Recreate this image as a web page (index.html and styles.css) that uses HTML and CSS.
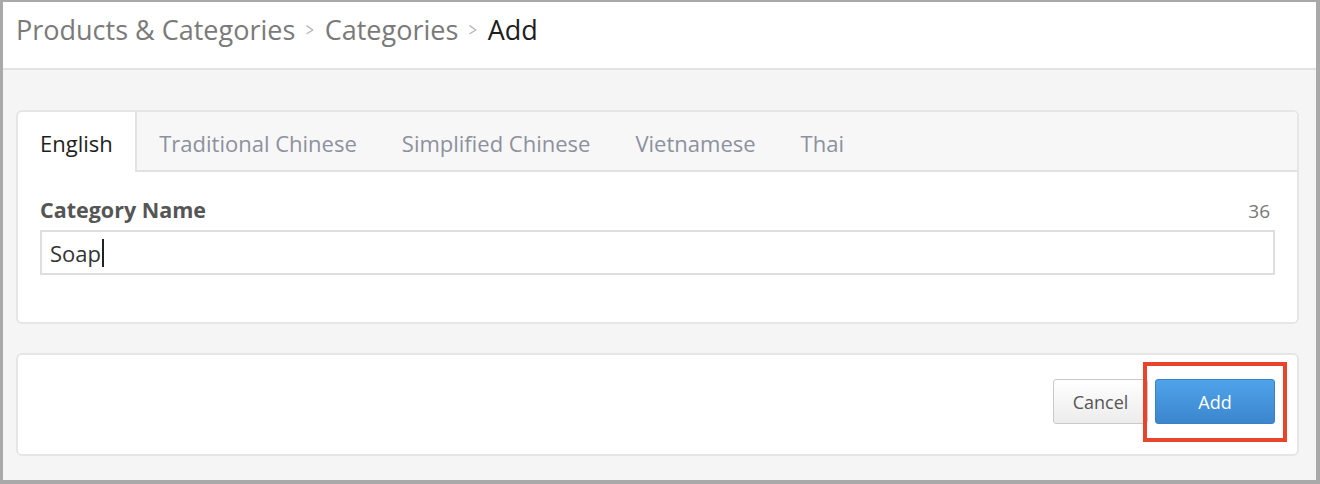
FILE: index.html
```html
<!DOCTYPE html>
<html>
<head>
<meta charset="utf-8">
<link rel="stylesheet" href="styles.css">
</head>
<body>
<div class="frame">
  <header class="header">
    <nav class="crumbs">
      <span class="crumb">Products &amp; Categories</span>
      <span class="sep">&gt;</span>
      <span class="crumb">Categories</span>
      <span class="sep">&gt;</span>
      <span class="crumb current">Add</span>
    </nav>
  </header>
  <main class="main">
    <section class="card">
      <div class="tabs">
        <div class="tab active">English</div>
        <div class="tab">Traditional Chinese</div>
        <div class="tab">Simplified Chinese</div>
        <div class="tab">Vietnamese</div>
        <div class="tab">Thai</div>
      </div>
      <div class="card-body">
        <div class="label-row">
          <label class="label">Category Name</label>
          <span class="count">36</span>
        </div>
        <div class="input"><span class="value">Soap</span><span class="caret"></span></div>
      </div>
    </section>
    <section class="card actions">
      <button class="btn btn-cancel">Cancel</button>
      <div class="highlight-wrap">
        <button class="btn btn-primary">Add</button>
        <div class="highlight"></div>
      </div>
    </section>
  </main>
</div>
</body>
</html>
```

FILE: styles.css
```css
* { box-sizing: border-box; }
html, body { margin: 0; padding: 0; }
body {
  width: 1320px;
  height: 484px;
  font-family: "Open Sans", "Liberation Sans", sans-serif;
  background: #a9a9a9;
  overflow: hidden;
}
.frame {
  margin: 2px 4px 0 3px;
  height: 478px;
  background: #f5f5f5;
  display: flex;
  flex-direction: column;
}
.header {
  background: #fff;
  height: 68px;
  border-bottom: 2px solid #e2e2e2;
  padding: 9px 0 0 13px;
}
.crumbs {
  display: flex;
  align-items: baseline;
  gap: 9px;
  font-size: 27px;
  font-weight: 400;
  color: #7a7a7a;
}
.sep {
  color: #b0b3ba;
  font-size: 20px;
  transform: scaleX(0.7);
  position: relative;
  top: -3px;
}
.crumb.current { color: #1e1e1e; }
.main {
  padding: 40px 17px 0 13px;
  display: flex;
  flex-direction: column;
  gap: 29px;
}
.card {
  background: #fff;
  border: 2px solid #e6e6e6;
  border-radius: 6px;
}
.tabs {
  display: flex;
  height: 60px;
  background: #f7f7f7;
  border-bottom: 2px solid #e2e2e2;
  border-radius: 6px 6px 0 0;
}
.tab {
  padding: 4px 22.5px 0 22.5px;
  font-size: 22px;
  color: #8c919e;
  display: flex;
  align-items: center;
}
.tab.active {
  background: #fff;
  color: #1e1e1e;
  border-right: 2px solid #e2e2e2;
  margin-bottom: -2px;
  border-radius: 6px 0 0 0;
  padding: 4px 22px 2px 22px;
}
.card-body {
  padding: 23px 22px 47px 22px;
}
.label-row {
  display: flex;
  justify-content: space-between;
  align-items: baseline;
  line-height: 30px;
  margin-bottom: 4px;
}
.label {
  font-size: 21.5px;
  font-weight: 700;
  color: #555;
}
.count {
  font-size: 19px;
  color: #777;
  padding-right: 5px;
}
.input {
  height: 45px;
  border: 2px solid #dedede;
  display: flex;
  align-items: center;
  padding: 0 8px;
  font-size: 22px;
  color: #333;
}
.caret {
  display: inline-block;
  width: 2px;
  height: 28px;
  background: #222;
  margin-left: 1px;
}
.actions {
  display: flex;
  justify-content: flex-end;
  align-items: flex-start;
  gap: 7px;
  padding: 24px 22px 30px 22px;
}
.btn {
  font-family: "Open Sans", "Liberation Sans", sans-serif;
  font-size: 18px;
  height: 45px;
  border-radius: 3px;
  cursor: pointer;
}
.btn-cancel {
  width: 95px;
  color: #555;
  background: linear-gradient(#ffffff, #ececec);
  border: 1px solid #c9c9c9;
}
.highlight-wrap {
  position: relative;
}
.btn-primary {
  width: 120px;
  color: #fff;
  background: linear-gradient(#4fa3ea, #3b86cd);
  border: 1px solid #3a80c4;
}
.highlight {
  position: absolute;
  left: -12px;
  top: -17px;
  width: 144px;
  height: 80px;
  border: 4px solid #e8432b;
  pointer-events: none;
}
```
